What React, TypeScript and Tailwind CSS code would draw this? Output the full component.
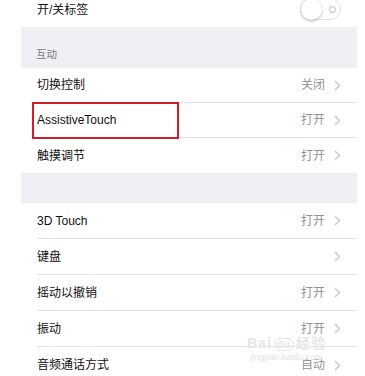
import React from "react";

interface Item {
  label: string;
  value?: string;
}

const groupA: Item[] = [
  { label: "切换控制", value: "关闭" },
  { label: "AssistiveTouch", value: "打开" },
  { label: "触摸调节", value: "打开" },
];

const groupB: Item[] = [
  { label: "3D Touch", value: "打开" },
  { label: "键盘" },
  { label: "摇动以撤销", value: "打开" },
  { label: "振动", value: "打开" },
  { label: "音频通话方式", value: "自动" },
];

const Chevron = () => (
  <svg width="7" height="11" viewBox="0 0 7 11" className="ml-[9px]">
    <path d="M1 1l4.5 4.5L1 10" fill="none" stroke="#c4c4c9" strokeWidth="1.3" />
  </svg>
);

const Row: React.FC<{ item: Item; last?: boolean; h: string }> = ({ item, last, h }) => (
  <div className={`flex bg-white pl-[16px] ${h}`}>
    <div
      className={`flex flex-1 items-center pr-[16px] ${last ? "" : "border-b border-[#e4e4e7]"}`}
    >
      <span className="flex-1 text-[12px] text-[#111]">{item.label}</span>
      {item.value && <span className="text-[12px] text-[#939398]">{item.value}</span>}
      <Chevron />
    </div>
  </div>
);

export default function App() {
  return (
    <div
      className="relative h-[376px] w-[365px] overflow-hidden bg-white"
      style={{ fontFamily: '"Liberation Sans", "Noto Sans CJK SC", sans-serif' }}
    >
      <div className="ml-[21px] w-[336px]">
        {/* 开/关标签 row, cut at the top */}
        <div className="flex h-[27px] bg-white pl-[16px] pr-[16px] pb-[7px]">
          <div className="flex flex-1 items-center">
            <span className="flex-1 text-[12px] text-[#111]">开/关标签</span>
            <div className="relative -mt-[2px] flex h-[22px] w-[41px] items-center rounded-full border border-[#e3e3e6] bg-white">
              <div className="h-[21px] w-[21px] rounded-full bg-white shadow-[0_1px_3px_rgba(0,0,0,0.3)]" />
              <div className="ml-[7px] h-[7px] w-[7px] rounded-full border border-[#b8b8bc]" />
            </div>
          </div>
        </div>

        {/* 互动 header */}
        <div className="flex h-[41px] items-end bg-[#efeff4] pb-[5px] pl-[15px]">
          <span className="text-[10.5px] text-[#7a7a7f]">互动</span>
        </div>

        {groupA.map((it, i) => (
          <Row key={it.label} item={it} last={i === groupA.length - 1} h="h-[35px]" />
        ))}

        <div className="h-[30px] bg-[#efeff4]" />

        {groupB.map((it, i) => (
          <Row key={it.label} item={it} last={i === groupB.length - 1} h="h-[36px]" />
        ))}
      </div>

      {/* red highlight box */}
      <div className="absolute left-[32px] top-[102px] h-[37px] w-[147px] border-2 border-[#d11d2b]" />

      {/* watermark */}
      <div className="pointer-events-none absolute left-[247px] top-[336px] flex flex-col items-center leading-none">
        <span className="text-[14px] font-bold tracking-[1px] text-[#e6e6e9]">
          Bai<span className="mx-[2px] rounded-full border border-[#e2e2e5] px-[2px] text-[10px]">du</span>经验
        </span>
        <span className="mt-[3px] text-[9px] text-[#e2e2e5]">jingyan.baidu.com</span>
      </div>
    </div>
  );
}
